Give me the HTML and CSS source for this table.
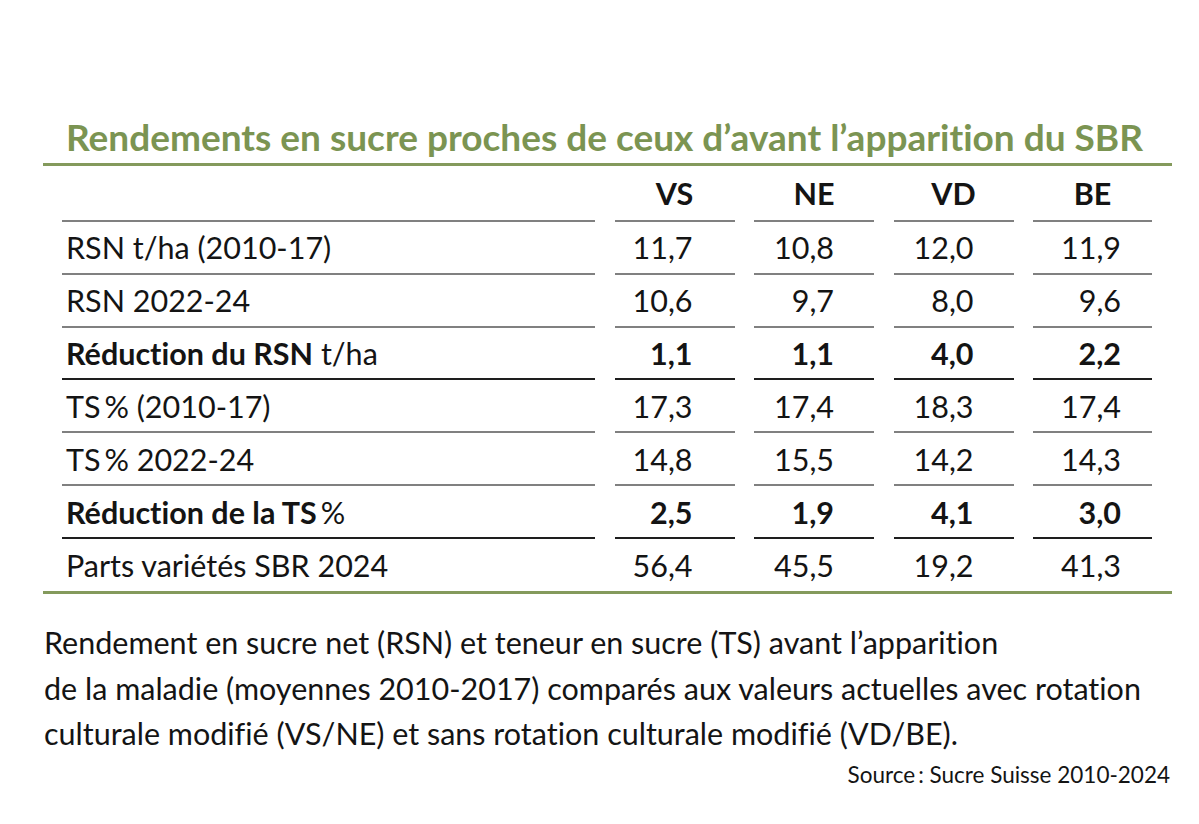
FILE: index.html
```html
<!DOCTYPE html>
<html lang="fr">
<head>
<meta charset="utf-8">
<title>Rendements en sucre</title>
<link rel="stylesheet" href="styles.css">
</head>
<body>
<div class="figure">
  <h1 class="title">Rendements en sucre proches de ceux d’avant l’apparition du SBR</h1>
  <div class="table">
    <div class="cell head label"></div>
    <div class="cell head col">VS</div>
    <div class="cell head col">NE</div>
    <div class="cell head col">VD</div>
    <div class="cell head col">BE</div>

    <div class="cell label">RSN t/ha (2010-17)</div>
    <div class="cell num c1">11,7</div>
    <div class="cell num c2">10,8</div>
    <div class="cell num c3">12,0</div>
    <div class="cell num c4">11,9</div>

    <div class="cell label">RSN 2022-24</div>
    <div class="cell num c1">10,6</div>
    <div class="cell num c2">9,7</div>
    <div class="cell num c3">8,0</div>
    <div class="cell num c4">9,6</div>

    <div class="cell label strong"><b>Réduction du RSN</b>&nbsp;t/ha</div>
    <div class="cell num c1 strong"><b>1,1</b></div>
    <div class="cell num c2 strong"><b>1,1</b></div>
    <div class="cell num c3 strong"><b>4,0</b></div>
    <div class="cell num c4 strong"><b>2,2</b></div>

    <div class="cell label">TS<span class="thin"></span>% (2010-17)</div>
    <div class="cell num c1">17,3</div>
    <div class="cell num c2">17,4</div>
    <div class="cell num c3">18,3</div>
    <div class="cell num c4">17,4</div>

    <div class="cell label">TS<span class="thin"></span>% 2022-24</div>
    <div class="cell num c1">14,8</div>
    <div class="cell num c2">15,5</div>
    <div class="cell num c3">14,2</div>
    <div class="cell num c4">14,3</div>

    <div class="cell label strong"><b>Réduction de la TS</b><span class="thin"></span>%</div>
    <div class="cell num c1 strong"><b>2,5</b></div>
    <div class="cell num c2 strong"><b>1,9</b></div>
    <div class="cell num c3 strong"><b>4,1</b></div>
    <div class="cell num c4 strong"><b>3,0</b></div>

    <div class="cell label last">Parts variétés SBR 2024</div>
    <div class="cell num c1 last">56,4</div>
    <div class="cell num c2 last">45,5</div>
    <div class="cell num c3 last">19,2</div>
    <div class="cell num c4 last">41,3</div>
  </div>
  <p class="caption">
    <span class="line">Rendement en sucre net (RSN) et teneur en sucre (TS) avant l’apparition</span>
    <span class="line">de la maladie (moyennes 2010-2017) comparés aux valeurs actuelles avec rotation</span>
    <span class="line">culturale modifié (VS/NE) et sans rotation culturale modifié (VD/BE).</span>
  </p>
  <p class="source">Source<span class="thin small"></span>: Sucre Suisse 2010-2024</p>
</div>
</body>
</html>
```
FILE: styles.css
```css
html, body {
  margin: 0;
  padding: 0;
  background: #ffffff;
}

body {
  font-family: "Lato", "Open Sans", sans-serif;
  color: #141414;
  font-variant-ligatures: no-common-ligatures;
}

.figure {
  width: 1129px;
  margin-left: 43px;
  padding-top: 115px;
}

.title {
  margin: 0;
  padding: 0 0 4px 23px;
  font-size: 37px;
  line-height: 44px;
  font-weight: 700;
  color: #7b9452;
  white-space: nowrap;
}

.table {
  display: grid;
  grid-template-columns: 533px 120px 120px 120px 119px;
  column-gap: 19.5px;
  padding: 0 19px;
  border-top: 3px solid #849a5c;
  border-bottom: 3px solid #849a5c;
  font-size: 30.5px;
}

.cell {
  display: flex;
  align-items: center;
  box-sizing: border-box;
  height: 52.83px;
  border-bottom: 2px solid #808080;
  white-space: nowrap;
}

.cell.head {
  height: 56px;
  font-weight: 700;
}

.cell.col {
  justify-content: center;
}

.cell.label {
  padding-left: 4px;
}

.cell.num {
  justify-content: flex-end;
}

.cell.c1 { padding-right: 42px; }
.cell.c2 { padding-right: 40px; }
.cell.c3 { padding-right: 40px; }
.cell.c4 { padding-right: 31px; }

.cell.strong {
  border-bottom-color: #1e1e1e;
}

.cell.last {
  height: 52px;
  border-bottom: none;
}

.thin {
  display: inline-block;
  width: 4px;
}

.thin.small {
  width: 3px;
}

b {
  font-weight: 700;
}

.caption {
  margin: 26.5px 0 0 1px;
  font-size: 30.5px;
  line-height: 45.5px;
}

.caption .line {
  display: block;
  white-space: nowrap;
}

.source {
  margin: 3px 0 0 0;
  padding-right: 2px;
  text-align: right;
  font-size: 22.5px;
  line-height: 30px;
}
```
